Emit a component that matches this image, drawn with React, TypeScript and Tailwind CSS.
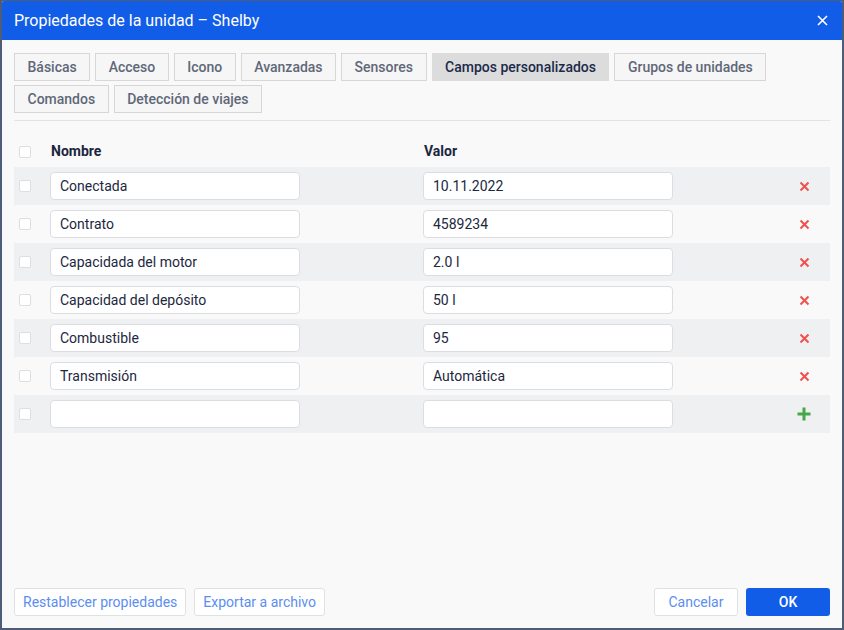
import React from "react";

const tabsRow1 = [
  "Básicas",
  "Acceso",
  "Icono",
  "Avanzadas",
  "Sensores",
  "Campos personalizados",
  "Grupos de unidades",
];
const tabsRow2 = ["Comandos", "Detección de viajes"];

const rows = [
  ["Conectada", "10.11.2022"],
  ["Contrato", "4589234"],
  ["Capacidada del motor", "2.0 l"],
  ["Capacidad del depósito", "50 l"],
  ["Combustible", "95"],
  ["Transmisión", "Automática"],
];

function Tab({ label, active }: { label: string; active?: boolean }) {
  return (
    <div
      className={
        active
          ? "h-[28px] px-[12.5px] flex items-center border border-[#dcdcdc] bg-[#dcdcdc] text-[#1b2a4a] text-[14px] font-medium"
          : "h-[28px] px-[12.5px] flex items-center border border-[#d7d7d7] bg-[#f6f6f6] text-[#5f6878] text-[14px] font-medium"
      }
    >
      {label}
    </div>
  );
}

function Checkbox() {
  return <div className="w-[12px] h-[12px] border border-[#dcdee2] bg-white rounded-[2px]" />;
}

function XIcon() {
  return (
    <svg width="11" height="11" viewBox="0 0 11 11">
      <path d="M1.5 1.5 L9.5 9.5 M9.5 1.5 L1.5 9.5" stroke="#f0514f" strokeWidth="2" strokeLinecap="butt" />
    </svg>
  );
}

function PlusIcon() {
  return (
    <svg width="14" height="14" viewBox="0 0 14 14">
      <path d="M7 0.5 V13.5 M0.5 7 H13.5" stroke="#46a84a" strokeWidth="3" />
    </svg>
  );
}

function Input({ value }: { value: string }) {
  return (
    <div className="w-[250px] h-[28px] border border-[#dcdde2] rounded-[4px] bg-white flex items-center px-[9px] text-[14px] text-[#1c2740]">
      {value}
    </div>
  );
}

export default function App() {
  return (
    <div
      className="w-[844px] h-[630px] bg-[#4f5c78] p-[2px] pt-[1px] flex flex-col"
      style={{ fontFamily: "Roboto, 'Liberation Sans', sans-serif" }}
    >
      <div className="flex-1 flex flex-col bg-[#f9f9f9] overflow-hidden rounded-tl-[2px] rounded-tr-[2px]">
        <div className="h-[39px] bg-[#115de8] flex items-center justify-between pl-[12px] pr-[14px] shrink-0">
          <span className="text-white text-[16px]">Propiedades de la unidad – Shelby</span>
          <svg width="11" height="11" viewBox="0 0 11 11">
            <path d="M1 1 L10 10 M10 1 L1 10" stroke="#ffffff" strokeWidth="1.6" />
          </svg>
        </div>
        <div className="flex-1 flex flex-col px-[12px] pt-[13px] pb-[12px]">
          <div className="flex flex-col gap-[4px]">
            <div className="flex gap-[5px]">
              {tabsRow1.map((t) => (
                <Tab key={t} label={t} active={t === "Campos personalizados"} />
              ))}
            </div>
            <div className="flex gap-[5px]">
              {tabsRow2.map((t) => (
                <Tab key={t} label={t} />
              ))}
            </div>
          </div>
          <div className="mt-[7px] h-px bg-[#e2e3e6]" />
          <div className="mt-[20px] h-[21px] flex items-center text-[14px] font-bold text-[#1b2640]">
            <div className="w-[36px] pl-[5px]">
              <Checkbox />
            </div>
            <div className="w-[373px] pl-[1px]">Nombre</div>
            <div className="pl-[1px]">Valor</div>
          </div>
          <div className="mt-[5px] flex flex-col">
            {[...rows, ["", ""]].map(([n, v], i) => (
              <div
                key={i}
                className={
                  i % 2 === 0
                    ? "h-[38px] flex items-center bg-[#eef0f2]"
                    : "h-[38px] flex items-center"
                }
              >
                <div className="w-[36px] pl-[5px]">
                  <Checkbox />
                </div>
                <div className="w-[373px]">
                  <Input value={n} />
                </div>
                <Input value={v} />
                <div className="flex-1 flex justify-end pr-[19px]">
                  <div className="w-[14px] flex justify-center">
                    {i === rows.length ? <PlusIcon /> : <XIcon />}
                  </div>
                </div>
              </div>
            ))}
          </div>
          <div className="mt-auto flex items-center">
            <button className="h-[28px] px-[8px] border border-[#dfe1e6] rounded-[3px] bg-white text-[14px] text-[#5b8ef0]">
              Restablecer propiedades
            </button>
            <button className="ml-[8px] h-[28px] px-[8px] border border-[#dfe1e6] rounded-[3px] bg-white text-[14px] text-[#5b8ef0]">
              Exportar a archivo
            </button>
            <div className="flex-1" />
            <button className="h-[28px] w-[84px] border border-[#dfe1e6] rounded-[3px] bg-white text-[14px] text-[#5b8ef0]">
              Cancelar
            </button>
            <button className="ml-[8px] h-[28px] w-[84px] rounded-[3px] bg-[#115de8] text-[14px] font-medium text-white">
              OK
            </button>
          </div>
        </div>
      </div>
    </div>
  );
}
